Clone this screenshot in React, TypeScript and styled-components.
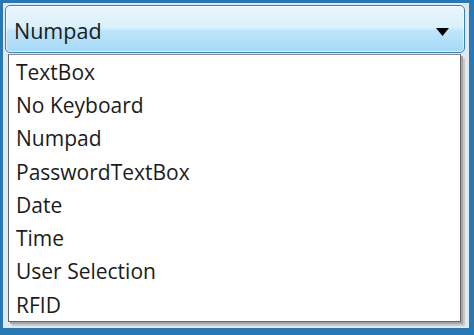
import * as React from "react";
import { FunctionComponent } from "react";
import styled, { createGlobalStyle } from "styled-components";

const GlobalStyle = createGlobalStyle`
  html, body {
    margin: 0;
    padding: 0;
    background: #2a78b3;
  }
`;

const Frame = styled.div`
  width: 474px;
  height: 335px;
  box-sizing: border-box;
  background: #2a78b3;
  padding: 3px 5px 7px 3px;
  font-family: "Open Sans", "Noto Sans", sans-serif;
`;

const Inner = styled.div`
  height: 100%;
  box-sizing: border-box;
  background: #dfe9f1;
  padding: 2px 4px 2px 2px;
  display: flex;
  flex-direction: column;
`;

const Combo = styled.div`
  height: 48px;
  flex-shrink: 0;
  box-sizing: border-box;
  border: 1px solid #3c7fb1;
  border-radius: 5px;
  background: linear-gradient(
    to bottom,
    #eaf6fd 0%,
    #d9f0fc 48%,
    #bee6fd 52%,
    #a7d9f5 100%
  );
  box-shadow: inset 0 0 0 1px rgba(255, 255, 255, 0.55);
  display: flex;
  align-items: center;
  justify-content: space-between;
  padding: 0 15px 0 8px;
  font-size: 21.5px;
  color: #1b1b1b;
`;

const ComboText = styled.span`
  position: relative;
  top: 1px;
`;

const Arrow = styled.svg`
  width: 13px;
  height: 8px;
  position: relative;
  top: 3px;
`;

const ListWrap = styled.div`
  flex: 1;
  display: flex;
  padding: 1px 0 0 3px;
`;

const List = styled.ul`
  list-style: none;
  margin: 0;
  padding: 0;
  flex: 1;
  box-sizing: border-box;
  background: #ffffff;
  border: 1px solid #646464;
  border-top: 1px solid #8a8a8a;
  box-shadow: 2px 2px 0 #a6a6a6, 4px 4px 0 #c8c8c8;
  margin-right: 4px;
  margin-bottom: 4px;
`;

const Item = styled.li`
  height: 33.3px;
  display: flex;
  align-items: center;
  padding-left: 7px;
  font-size: 21px;
  color: #1b1b1b;
`;

const items = [
  "TextBox",
  "No Keyboard",
  "Numpad",
  "PasswordTextBox",
  "Date",
  "Time",
  "User Selection",
  "RFID",
];

const App: FunctionComponent = () => {
  return (
    <>
      <GlobalStyle />
      <Frame>
        <Inner>
          <Combo>
            <ComboText>Numpad</ComboText>
            <Arrow viewBox="0 0 13 8">
              <polygon points="0,0 13,0 6.5,8" fill="#000" />
            </Arrow>
          </Combo>
          <ListWrap>
            <List>
              {items.map((t) => (
                <Item key={t}>{t}</Item>
              ))}
            </List>
          </ListWrap>
        </Inner>
      </Frame>
    </>
  );
};

export default App;
